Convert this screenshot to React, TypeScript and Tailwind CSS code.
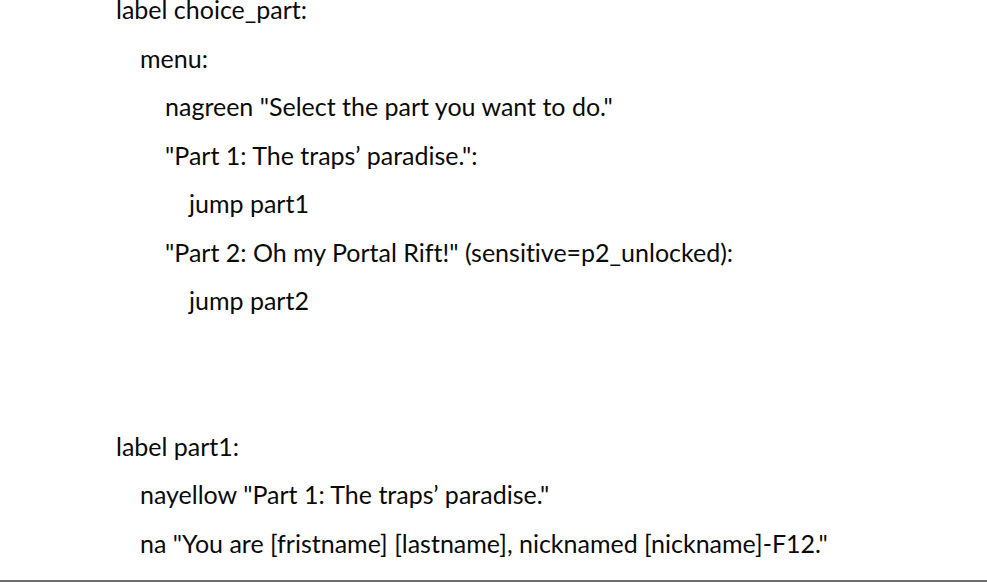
const lines: { indent: number; text: string }[] = [
  { indent: 0, text: 'label choice_part:' },
  { indent: 1, text: 'menu:' },
  { indent: 2, text: 'nagreen "Select the part you want to do."' },
  { indent: 2, text: '"Part 1: The traps\u2019 paradise.":' },
  { indent: 3, text: 'jump part1' },
  { indent: 2, text: '"Part 2: Oh my Portal Rift!" (sensitive=p2_unlocked):' },
  { indent: 3, text: 'jump part2' },
  { indent: 0, text: '' },
  { indent: 0, text: '' },
  { indent: 0, text: 'label part1:' },
  { indent: 1, text: 'nayellow "Part 1: The traps\u2019 paradise."' },
  { indent: 1, text: 'na "You are [fristname] [lastname], nicknamed [nickname]-F12."' },
]

const indents = ['pl-0', 'pl-[24px]', 'pl-[49px]', 'pl-[73px]']

export default function App() {
  return (
    <div className="relative h-[583px] w-[987px] overflow-hidden bg-white">
      <div className="mt-[-15px] pl-[116px] font-['Lato',_'Liberation_Sans',_sans-serif] text-[25px] text-[#0a0a0a] [font-variant-ligatures:none]">
        {lines.map((line, i) => (
          <div key={i} className={`h-[48.5px] leading-[48.5px] whitespace-pre ${indents[line.indent]}`}>
            {line.text}
          </div>
        ))}
      </div>
      <div className="absolute bottom-0 left-0 right-0 h-[3px] border-t-2 border-[#6e6e6e] bg-white" />
    </div>
  )
}
